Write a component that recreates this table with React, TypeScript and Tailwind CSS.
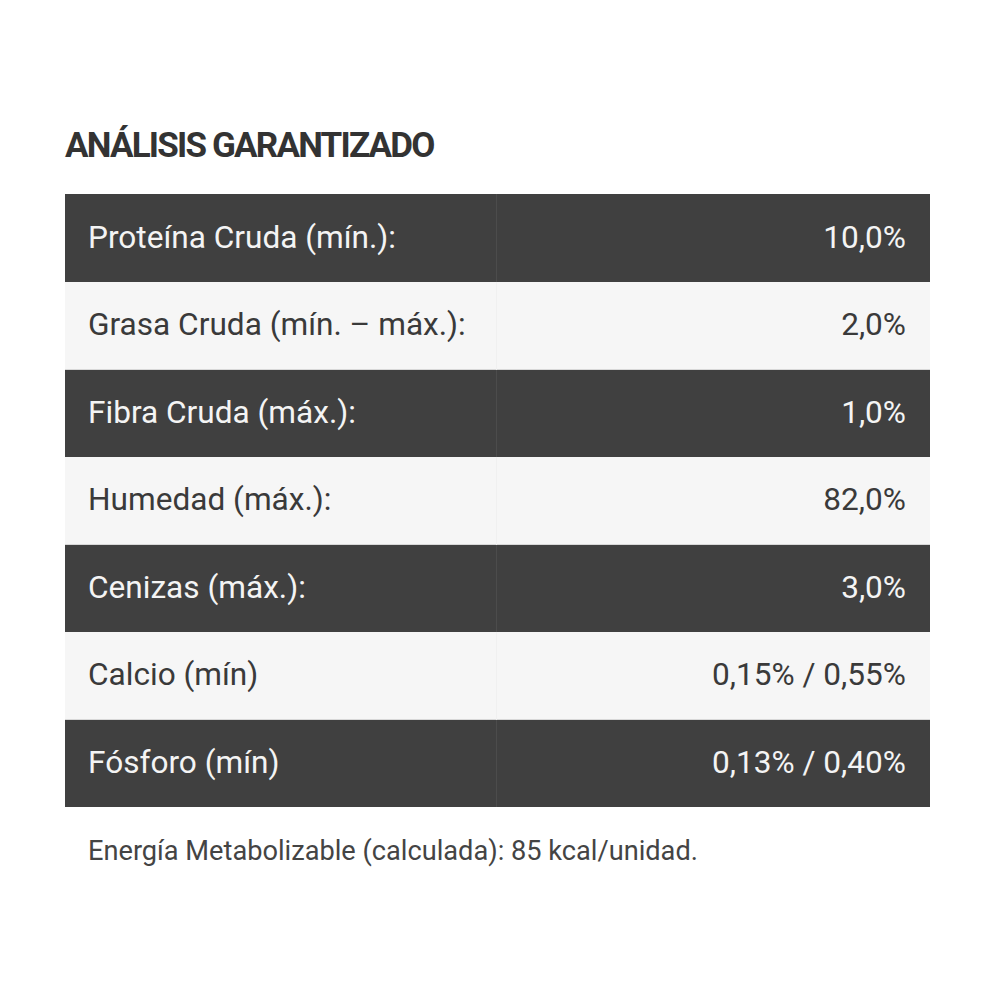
const rows = [
  { label: "Proteína Cruda (mín.):", value: "10,0%" },
  { label: "Grasa Cruda (mín. – máx.):", value: "2,0%" },
  { label: "Fibra Cruda (máx.):", value: "1,0%" },
  { label: "Humedad (máx.):", value: "82,0%" },
  { label: "Cenizas (máx.):", value: "3,0%" },
  { label: "Calcio (mín)", value: "0,15% / 0,55%" },
  { label: "Fósforo (mín)", value: "0,13% / 0,40%" },
];

export default function App() {
  return (
    <div className="w-[1000px] h-[1000px] bg-white font-['Roboto',sans-serif] pt-[124px] px-[65px]">
      <h2 className="text-[35px] leading-[44px] font-bold tracking-[-1.8px] text-[#333333] uppercase">
        Análisis garantizado
      </h2>
      <table className="w-[865px] mt-[26px] border-collapse">
        <tbody>
          {rows.map((row, i) => {
            const dark = i % 2 === 0;
            return (
              <tr
                key={row.label}
                className={dark ? "bg-[#404040] text-[#f4f4f4]" : "bg-[#f6f6f6] text-[#3a3a3a] border-b border-[#d8d8d8]"}
              >
                <td
                  className={
                    "h-[87.5px] w-[431px] pl-[23px] text-[31.6px] " +
                    (dark ? "border-r border-[#4c4c4c]" : "border-r border-[#f0f0f0]")
                  }
                >
                  {row.label}
                </td>
                <td className="h-[87.5px] pr-[24px] text-right text-[31.6px]">{row.value}</td>
              </tr>
            );
          })}
        </tbody>
      </table>
      <p className="mt-[24px] pl-[23px] text-[27.2px] text-[#444444]">
        Energía Metabolizable (calculada): 85 kcal/unidad.
      </p>
    </div>
  );
}
